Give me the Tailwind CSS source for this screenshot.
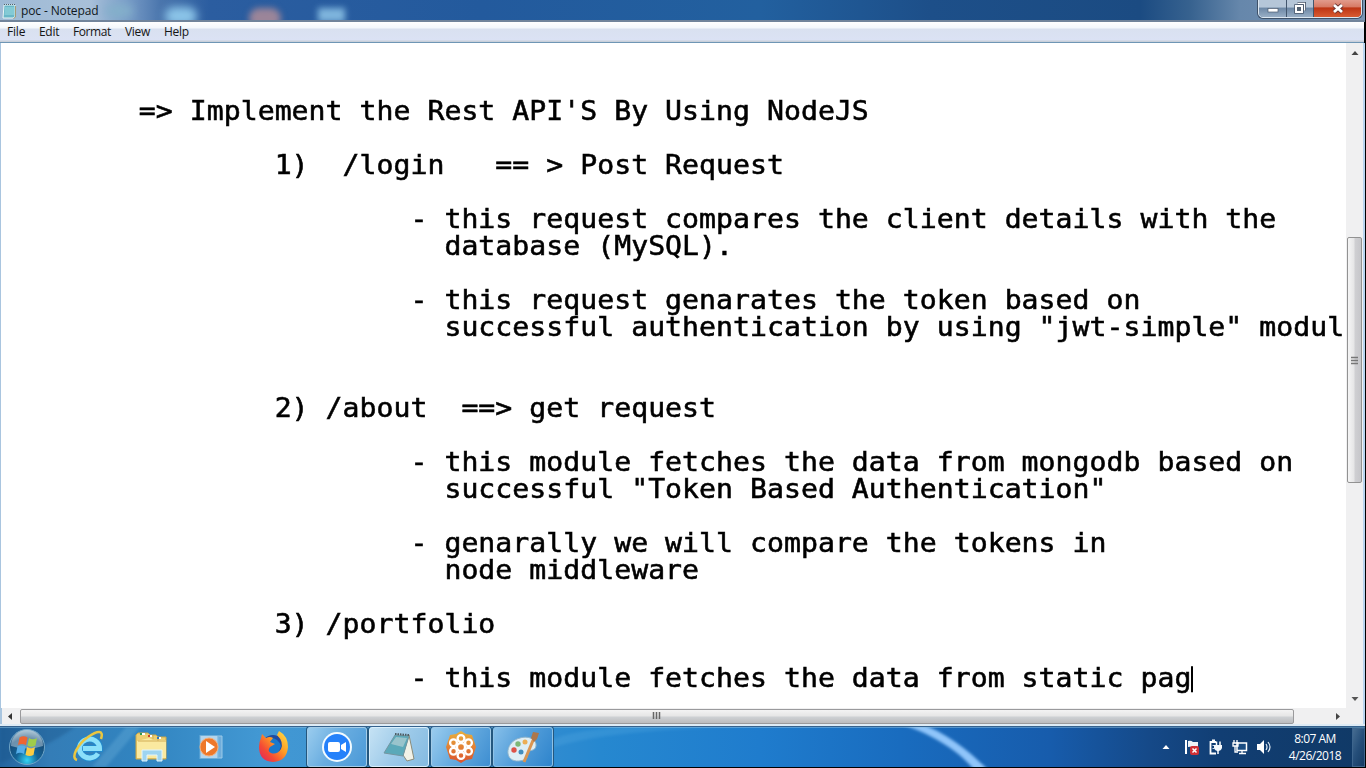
<!DOCTYPE html>
<html lang="en">
<head>
<meta charset="utf-8">
<title>poc - Notepad</title>
<script src="https://cdn.jsdelivr.net/npm/@tailwindcss/browser@4"></script>
</head>
<body class="w-[1366px] h-[768px] overflow-hidden bg-black font-['Open_Sans',sans-serif]">
<div class="flex flex-col w-[1366px] h-[768px]">

  <!-- Title bar -->
  <header class="relative h-[22px] w-[1365px] shrink-0 overflow-hidden bg-[linear-gradient(90deg,#9fbad5_0,#a8c0d9_90px,#7c9fc9_125px,#4b76ad_160px,#2b5da0_210px,#235a9d_480px,#22609f_760px,#1d4f89_930px,#1b4b82_1140px,#37628f_1190px,#6687ab_1240px,#7895b5_1365px)] border-b-2 border-[#71849b]">
    <div class="absolute left-[165px] top-[7px] w-[32px] h-[18px] rounded-full bg-[#8bc4e8] blur-[4px]"></div>
    <div class="absolute left-[105px] top-[5px] w-[28px] h-[12px] rounded-full bg-[#83b0ca] blur-[5px]"></div>
    <div class="absolute left-[249px] top-[8px] w-[32px] h-[20px] rounded-full bg-[#9b8599] blur-[3px]"></div>
    <div class="absolute left-[318px] top-[8px] w-[27px] h-[14px] bg-[#7fb5dd] blur-[3px]"></div>
    <div class="relative flex h-full items-start">
      <svg class="ml-[2px] mt-[3px]" width="15" height="16" viewBox="0 0 15 16"><path d="M2 2h11v12l-2 1H1z" fill="#69b7c8" stroke="#e9f5f5"/><path d="M3 4h9v8H2.500z" fill="#83cad5"/><path d="M2 1.500h11" stroke="#52626a" stroke-dasharray="1 1"/><path d="M13.500 3v11l-2 1.500" stroke="#a59b76" fill="none"/></svg>
      <span class="ml-[4px] text-[12px] leading-[21px] tracking-[-0.12px] text-[#101820]">poc - Notepad</span>
    </div>
    <div class="absolute right-[3px] top-[-2px] flex h-[20px] w-[104px] overflow-hidden rounded-b-[5px] border border-[#dce7f1] ring-1 ring-[#3e5168]">
      <div class="flex w-[28px] justify-center border-r border-[#42566d] bg-[linear-gradient(#b5c6d8_0_45%,#6c87a5_50%,#98aec5)]">
        <svg width="14" height="18"><rect x="2" y="9.500" width="10" height="3.500" fill="#fff" stroke="#4d5c70" stroke-width=".7"/></svg>
      </div>
      <div class="flex w-[27px] justify-center border-r border-[#42566d] bg-[linear-gradient(#b5c6d8_0_45%,#6c87a5_50%,#98aec5)]">
        <svg width="14" height="18"><path d="M4.500 4.500h7v7" fill="none" stroke="#475569" stroke-width="3"/><path d="M4.500 4.500h7v7" fill="none" stroke="#fff" stroke-width="1.300"/><rect x="3" y="7" width="6" height="6" fill="#536273" stroke="#475569" stroke-width="3.500"/><rect x="3" y="7" width="6" height="6" fill="#536273" stroke="#fff" stroke-width="2"/></svg>
      </div>
      <div class="flex grow justify-center bg-[linear-gradient(#e3a092_0,#d77b66_43%,#bd3515_50%,#d85b32)]">
        <svg width="14" height="18"><path d="M3 6l8 7m0-7l-8 7" stroke="#6b3433" stroke-width="4.500"/><path d="M3 6l8 7m0-7l-8 7" stroke="#fff" stroke-width="2.800"/></svg>
      </div>
    </div>
  </header>

  <!-- Menu bar -->
  <nav class="flex h-[21px] w-[1364px] shrink-0 border-b border-[#6e96b5] bg-[linear-gradient(#fff_0,#f3f7fc_6px,#d9e1f0_7px,#dbe2f4_18px,#c9d0da_19px)] pl-[7px] text-[12px] leading-[19px] text-[#151515]">
    <span class="w-[32px] tracking-[-0.2px]">File</span>
    <span class="w-[34px] tracking-[-0.3px]">Edit</span>
    <span class="w-[52px] tracking-[-0.4px]">Format</span>
    <span class="w-[39px] tracking-[-0.3px]">View</span>
    <span class="tracking-[-0.3px]">Help</span>
  </nav>

  <!-- Document -->
  <main class="flex h-[665px] w-[1365px] shrink-0 border-l border-r-2 border-l-[#a9c5df] border-r-[#b9d5f0] bg-white">
    <div class="w-[1345px] shrink-0 overflow-hidden pl-[2px] pt-[55px]">
<pre class="origin-top-left scale-y-[0.93] whitespace-pre font-['DejaVu_Sans_Mono',monospace] text-[28.15px] leading-[29px] tracking-[0.035px] text-black [-webkit-text-stroke:0.6px_#000]">        =&gt; Implement the Rest API'S By Using NodeJS

                1)  /login   == &gt; Post Request

                        - this request compares the client details with the
                          database (MySQL).

                        - this request genarates the token based on
                          successful authentication by using "jwt-simple" modul


                2) /about  ==&gt; get request

                        - this module fetches the data from mongodb based on
                          successful "Token Based Authentication"

                        - genarally we will compare the tokens in
                          node middleware

                3) /portfolio

                        - this module fetches the data from static pag<span class="inline-block h-[28px] w-[1.5px] bg-black align-[-6px]"></span></pre>
    </div>
    <div class="flex w-[17px] shrink-0 flex-col items-center bg-[#f0f0f1]">
      <svg class="mt-[7px] shrink-0" width="8" height="6"><path d="M0.500 5L4 1l3.500 4z" fill="#444"/></svg>
      <div class="mt-[181px] flex h-[246px] w-[15px] shrink-0 items-center justify-center rounded-[2px] border border-[#929292] bg-[linear-gradient(90deg,#f5f5f5,#e6e6e7_45%,#cfcfd2_55%,#c6c6ca)]">
        <svg width="7" height="9"><path d="M0 1.500h7M0 4.500h7M0 7.500h7" stroke="#777" stroke-width="1.500"/></svg>
      </div>
      <svg class="mt-auto mb-[6px] shrink-0" width="8" height="6"><path d="M0.500 1L4 5l3.500-4z" fill="#555"/></svg>
    </div>
  </main>

  <!-- Horizontal scrollbar -->
  <div class="flex h-[16px] w-[1365px] shrink-0 items-center border-l-2 border-r-2 border-l-[#a9c5df] border-r-[#b9d5f0] bg-[#f0f0f1]">
    <svg class="ml-[5px]" width="6" height="9"><path d="M5 1L1 4.500 5 8z" fill="#333"/></svg>
    <div class="ml-[7px] flex h-[15px] w-[1274px] items-center justify-center rounded-[2px] border border-[#9a9a9c] bg-[linear-gradient(#f3f3f3,#e6e6e6_45%,#cdd0d3_55%,#bcbcbe)]">
      <svg class="-mt-[2px] mr-[2px]" width="9" height="7"><path d="M1.500 0v7M4.500 0v7M7.500 0v7" stroke="#666" stroke-width="1.500"/></svg>
    </div>
    <svg class="ml-[41px]" width="6" height="9"><path d="M1 1l4 3.500L1 8z" fill="#444"/></svg>
  </div>
  <div class="h-[2px] w-[1365px] shrink-0 bg-[#deebf5]"></div>

  <!-- Taskbar -->
  <footer class="relative flex h-[41px] w-[1365px] shrink-0 overflow-hidden border-t border-[#35628e] bg-[linear-gradient(90deg,#24659f_0,#347db7_50px,#3184c0_140px,#4298d3_260px,#398fd0_500px,#2688d0_600px,#1f7ccd_760px,#196cbf_900px,#175cac_1050px,#154988_1150px,#113e73_1220px,#103966_1365px)]">
    <svg class="absolute inset-0" width="1365" height="40">
      <defs><filter id="soft"><feGaussianBlur stdDeviation="1.600"/></filter></defs>
      <path d="M0 0h75Q45 22 0 36z" fill="#174f83" opacity=".35" filter="url(#soft)"/>
      <path d="M140 0h-14L92 40h14z" fill="#8fcdec" opacity=".22" filter="url(#soft)"/>
      <path d="M548 22Q610 1 760 0L620 0Q570 4 548 14z" fill="#65b5e7" opacity=".22" filter="url(#soft)"/>
      <path d="M898-4C930 6 960 24 975 44h14C968 22 945 6 920-4z" fill="#8fc5fa" filter="url(#soft)"/>
      <path d="M0 .5h1365" stroke="#8fc0df" opacity=".5"/>
    </svg>

    <div class="relative flex h-full items-center">
      <svg class="ml-[8px] shrink-0" width="38" height="38" viewBox="0 0 38 38">
        <defs><radialGradient id="orb" cx=".5" cy=".88" r=".9"><stop offset="0" stop-color="#35d4f4"/><stop offset=".35" stop-color="#146497"/><stop offset=".7" stop-color="#174c78"/><stop offset="1" stop-color="#a9c4d5"/></radialGradient></defs>
        <circle cx="19" cy="19" r="17.500" fill="url(#orb)" stroke="#6fa5c7"/>
        <path d="M3 18A16 16 0 0 1 35 18Q19 23 3 18z" fill="#d4e5ed" opacity=".45"/>
        <path d="M11.500 9.500q4-2.500 8 0L18 17q-4-2-8 0z" fill="#ee6532"/><path d="M21 10q4 2.500 8 0l-1.500 7.500q-4 2.500-8 0z" fill="#9fcc4b"/><path d="M9.500 18.500q4-2 8 0L16 26q-4-2.500-8 0z" fill="#55aeea"/><path d="M19 19q4 2.500 8 0L25.500 27q-4 2-8 0z" fill="#fccc42"/>
      </svg>
      <svg class="ml-[27px] shrink-0" width="32" height="34" viewBox="0 0 32 34">
        <path d="M25 23.500A10 9.500 0 1 1 26.500 18.500H10" fill="none" stroke="#2389cc" stroke-width="7"/>
        <path d="M25 23.500A10 9.500 0 1 1 26.500 18.500H10" fill="none" stroke="#8be0fa" stroke-width="5"/>
        <path d="M4 30C-3 28 5 14 15 7S31 0 28 9" fill="none" stroke="#eac640" stroke-width="2.500"/>
      </svg>
      <svg class="ml-[30px] shrink-0" width="34" height="34" viewBox="0 0 34 34">
        <path d="M1 5l2-2h10l2 2h6l2 2h8v22H1z" fill="#edcf72" stroke="#cca94b"/>
        <path d="M2 11l12-3 4 2h13v18H2z" fill="#fae9a0"/><path d="M3 11h28M18 9V5m5 6V7" stroke="#d1ad56"/><path d="M5 4h5M13 6h4M22 8h4" stroke="#fff" stroke-width="2"/><path d="M6 3v2" stroke="#2c9b4f" stroke-width="2"/><path d="M14 5v2" stroke="#cc4430" stroke-width="2"/><path d="M23 7v2" stroke="#3578ba" stroke-width="2"/>
        <path d="M7 31V20h20v11h-5v-6H12v6z" fill="#9ed4f0" stroke="#e2f5fc"/>
      </svg>
      <svg class="ml-[29px] shrink-0" width="26" height="30" viewBox="0 0 26 30">
        <path d="M20 4h4v22h-4z" fill="#70addb" stroke="#9acae9"/><rect x="2" y="3.500" width="18" height="23" fill="#b4d5ed" stroke="#6daed9"/>
        <circle cx="11" cy="15" r="9" fill="#ee782a" stroke="#f6ad76"/><path d="M8 9l9 6-9 6z" fill="#fff"/>
      </svg>
      <svg class="ml-[33px] shrink-0" width="33" height="34" viewBox="0 0 33 34">
        <defs><linearGradient id="fox" x1="1" y1="0" x2="0" y2="1"><stop offset="0" stop-color="#ffe34b"/><stop offset=".4" stop-color="#ff9d23"/><stop offset=".7" stop-color="#f44a35"/><stop offset="1" stop-color="#dc2165"/></linearGradient></defs>
        <circle cx="16" cy="17" r="12" fill="#214ba0"/><path d="M14 8q7 0 10 8l-3 8H11z" fill="#1979cc"/>
        <path d="M4 8l1-4 4 4q4-2 7 0l-3 4 5 2-5 3q-3 4 1 6 6 2 10-4 3-7-4-14l2-4q9 5 9 16-1 14-15 15Q2 31 2 17q0-5 2-9z" fill="url(#fox)"/>
      </svg>
    </div>

    <div class="relative ml-[17px] flex gap-[2px]">
      <div class="flex h-[40px] w-[60px] items-center justify-center rounded-[3px] border border-[#a3cce8] ring-1 ring-[#24577e] bg-[linear-gradient(120deg,#9accee,#69ade0_45%,#4b99d7)]">
        <svg width="32" height="32"><circle cx="16" cy="16" r="15" fill="#f2fbff"/><circle cx="16" cy="16" r="13" fill="#2481fa"/><rect x="7" y="11" width="12" height="10" rx="2" fill="#fff"/><path d="M20 14l5-3v10l-5-3z" fill="#fff"/></svg>
      </div>
      <div class="flex h-[40px] w-[60px] items-center justify-center rounded-[3px] border border-[#d9effc] ring-1 ring-[#24577e] bg-[linear-gradient(120deg,#c5e2f4,#9dcae9_50%,#84bae1)]">
        <svg width="34" height="34" viewBox="0 0 34 34"><path d="M27 5l5 24-7 2-4-6z" fill="#f2f2e7" stroke="#8b8b78"/><path d="M13 5l14 1-6 20L2 23z" fill="#5ba9b9" stroke="#7496a1"/><path d="M14 7l11 1-4 9L9 14z" fill="#b4d0d4" opacity=".7"/><path d="M13 4l14 1" stroke="#4c5a61" stroke-width="2" stroke-dasharray="1.500 1"/></svg>
      </div>
      <div class="flex h-[40px] w-[60px] items-center justify-center rounded-[3px] border border-[#a3cce8] ring-1 ring-[#24577e] bg-[linear-gradient(120deg,#9accee,#69ade0_45%,#3e8ed1)]">
        <svg width="34" height="34" viewBox="0 0 34 34"><defs><linearGradient id="flower" x1="0" y1="0" x2="0" y2="1"><stop offset="0" stop-color="#e8b13d"/><stop offset="1" stop-color="#dc522e"/></linearGradient></defs><path d="M17 1l5 3 6 1 2 6 2 6-2 6-2 6-6 1-5 3-5-3-6-1-2-6-2-6 2-6 2-6 6-1z" fill="url(#flower)"/><g fill="none" stroke="#fff" stroke-width="2.300"><circle cx="17" cy="8.500" r="3.400"/><circle cx="24.500" cy="12.700" r="3.400"/><circle cx="24.500" cy="21.300" r="3.400"/><circle cx="17" cy="25.500" r="3.400"/><circle cx="9.500" cy="21.300" r="3.400"/><circle cx="9.500" cy="12.700" r="3.400"/><circle cx="17" cy="17" r="4"/></g></svg>
      </div>
      <div class="flex h-[40px] w-[60px] items-center justify-center rounded-[3px] border border-[#8fc2e6] ring-1 ring-[#24577e] bg-[linear-gradient(120deg,#86bfe9,#559fda_45%,#2e84cc)]">
        <svg width="36" height="34" viewBox="0 0 36 34"><path d="M14 31C-1 32 0 14 12 9s20 1 19 7-7 3-8 7 0 7-9 8z" fill="#deeef5" stroke="#91b6cc"/><circle cx="9" cy="20" r="2.700" fill="#dd5248"/><circle cx="13" cy="14" r="2.700" fill="#7eb876"/><circle cx="20" cy="12" r="2.500" fill="#ecae55"/><circle cx="16" cy="22" r="2.500" fill="#438dbd"/><path d="M19 32L29 8" stroke="#d99552" stroke-width="3"/><path d="M26 8l2-6 6 1-2 6-3 3z" fill="#ad774b"/></svg>
      </div>
    </div>

    <div class="relative ml-auto flex h-full items-center">
      <svg class="mr-[14px]" width="8" height="6"><path d="M0.500 5L4 1l3.500 4z" fill="#fff"/></svg>
      <svg class="mr-[8px]" width="16" height="18" viewBox="0 0 16 18"><path d="M2 2v14" stroke="#fff" stroke-width="2"/><path d="M4 3q3-1 5 1h5v6H9q-2-2-5-1z" fill="#eef4f8"/><rect x="6" y="8" width="9" height="9" rx="2" fill="#cf3036"/><path d="M8.500 10.500l4 4m0-4l-4 4" stroke="#fff" stroke-width="1.500"/></svg>
      <svg class="mr-[9px]" width="15" height="18" viewBox="0 0 15 18"><path d="M8 15.500H2.500V4H8M4 2.500h3" fill="none" stroke="#fff" stroke-width="1.800"/><path d="M4.500 7.500h2M4.500 10.500h2" stroke="#d5e0ee"/><path d="M6 7h8v3q-1 3-4 3t-4-3z" fill="#f5f9fc"/><path d="M8.500 7V3.500m3.500 3.500V3.500M10 12v4" stroke="#fff" stroke-width="1.500"/></svg>
      <svg class="mr-[8px]" width="16" height="18" viewBox="0 0 16 18"><rect x="5" y="5" width="9.500" height="7.500" fill="#1a4c82" stroke="#fff" stroke-width="1.500"/><path d="M7 15.500h7m-4-3v3M2 2v3m3-3v3M1 5h5v3H1zm2 3v6h3" fill="none" stroke="#fff" stroke-width="1.300"/></svg>
      <svg class="mr-[17px]" width="16" height="18" viewBox="0 0 16 18"><path d="M1 6h3l4-4v14l-4-4H1z" fill="#fff"/><path d="M10 6q2 3 0 6m2-8q4 5 0 10" fill="none" stroke="#e2edf7" stroke-width="1.200"/></svg>
      <div class="mr-[11px] flex w-[52px] flex-col items-center whitespace-nowrap text-[12px] leading-[17px] tracking-[-0.5px] text-white">
        <span>8:07 AM</span>
        <span>4/26/2018</span>
      </div>
      <div class="h-[39px] w-[13px] border border-[#3d658d] bg-[linear-gradient(110deg,#466c91,#254e79_50%,#153b64)]"></div>
    </div>
  </footer>
</div>
</body>
</html>
